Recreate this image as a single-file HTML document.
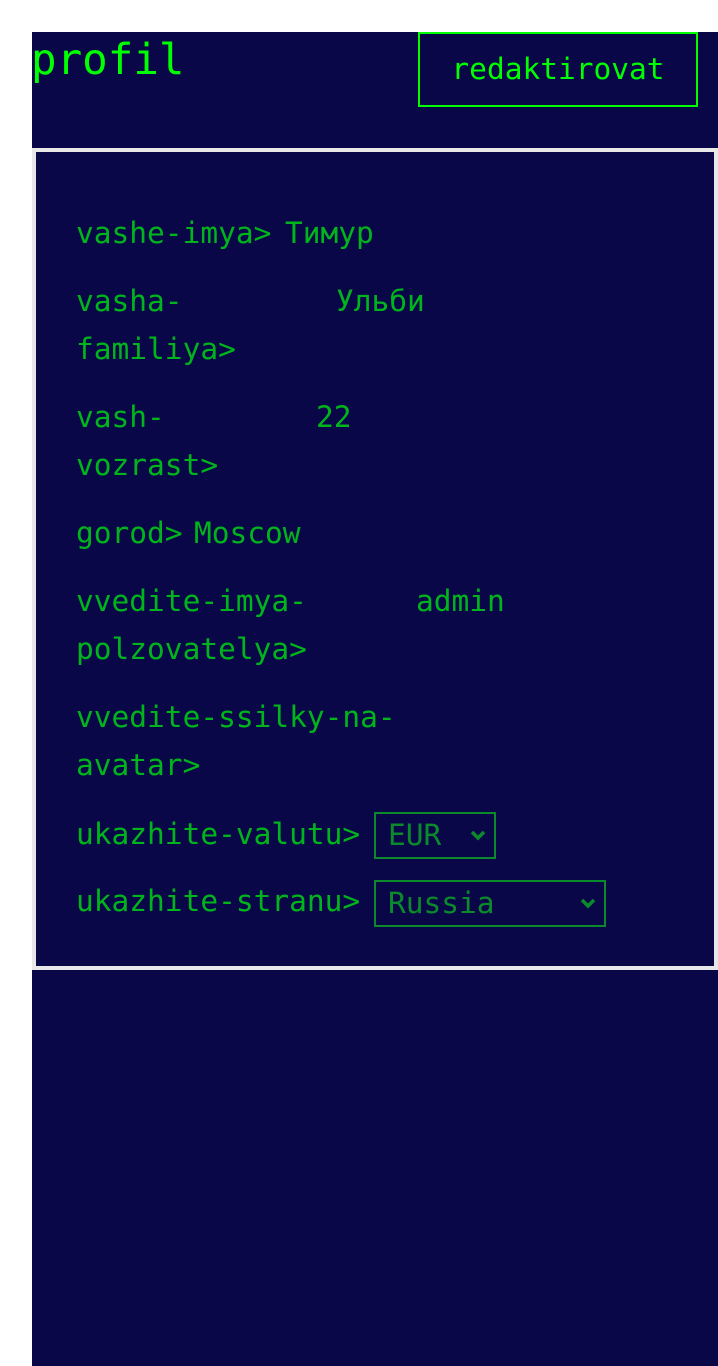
<!DOCTYPE html>
<html><head><meta charset="utf-8"><style>
html,body{margin:0;padding:0;background:#fff;width:718px;height:1366px;overflow:hidden}
body{position:relative;font-family:"DejaVu Sans Mono","Liberation Mono","Noto Sans CJK SC",monospace}
.bg{position:absolute;left:32px;top:32px;width:686px;height:1334px;background:#0a0748}
.t{position:absolute;font-size:29.5px;color:#00b51c;line-height:48px;white-space:nowrap}
.h{position:absolute;left:31px;top:31px;font-size:42.5px;color:#00ff00;line-height:60px}
.btn{position:absolute;left:418px;top:32px;width:276px;height:71px;border:2px solid #00ff00;color:#00ff00;font-size:29.5px;line-height:71px;text-align:center}
.card{position:absolute;left:32px;top:148px;width:678px;height:814px;border:4px solid #e8e8e8;background:#0a0748}
.sel{position:absolute;border:2px solid #0a8a2a;color:#0a8a2a;font-size:29.5px;line-height:43px;height:43px;padding-left:12px}
.sel svg{position:absolute;right:8px;top:15px}
</style></head><body>
<div class="bg"></div>
<div class="h">profil</div>
<div class="btn">redaktirovat</div>
<div class="card"></div>
<div class="t" style="left:76px;top:209px">vashe-imya&gt;</div>
<div class="t" style="left:285px;top:209px">Тимур</div>
<div class="t" style="left:76px;top:277px">vasha-</div>
<div class="t" style="left:76px;top:325px">familiya&gt;</div>
<div class="t" style="left:336px;top:277px">Ульби</div>
<div class="t" style="left:76px;top:393px">vash-</div>
<div class="t" style="left:76px;top:441px">vozrast&gt;</div>
<div class="t" style="left:316px;top:393px">22</div>
<div class="t" style="left:76px;top:509px">gorod&gt;</div>
<div class="t" style="left:194px;top:509px">Moscow</div>
<div class="t" style="left:76px;top:577px">vvedite-imya-</div>
<div class="t" style="left:76px;top:625px">polzovatelya&gt;</div>
<div class="t" style="left:416px;top:577px">admin</div>
<div class="t" style="left:76px;top:693px">vvedite-ssilky-na-</div>
<div class="t" style="left:76px;top:741px">avatar&gt;</div>
<div class="t" style="left:76px;top:810px">ukazhite-valutu&gt;</div>
<div class="sel" style="left:374px;top:812px;width:106px">EUR<svg width="16" height="12" viewBox="0 0 16 12"><path d="M2 3l6 6 6-6" fill="none" stroke="#0a8a2a" stroke-width="3.5"/></svg></div>
<div class="t" style="left:76px;top:877px">ukazhite-stranu&gt;</div>
<div class="sel" style="left:374px;top:880px;width:216px">Russia<svg width="16" height="12" viewBox="0 0 16 12"><path d="M2 3l6 6 6-6" fill="none" stroke="#0a8a2a" stroke-width="3.5"/></svg></div>
</body></html>
